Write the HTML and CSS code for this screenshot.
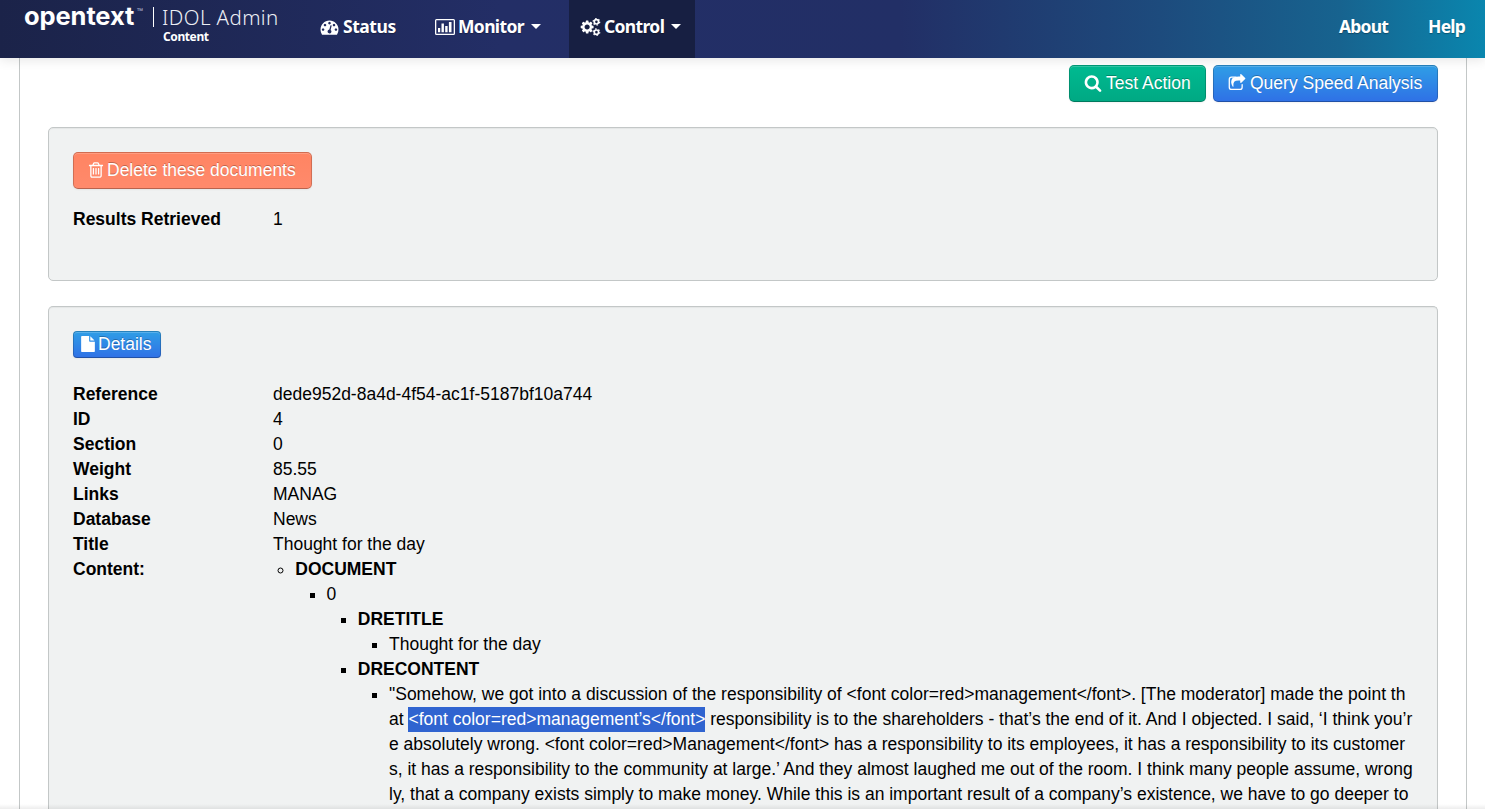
FILE: index.html
```html
<!DOCTYPE html>
<html lang="en">
<head>
<meta charset="utf-8">
<title>IDOL Admin</title>
<link rel="stylesheet" href="styles.css">
</head>
<body>
<header class="navbar">
  <div class="brand">
    <span class="logo">opentext</span><span class="tm">™</span>
    <span class="divider"></span>
    <div class="product"><span class="name">IDOL Admin</span><span class="component">Content</span></div>
  </div>
  <nav class="menu">
    <a class="item status"><svg class="icon" style="width:19px" viewBox="0 0 1792 1792"><path d="M384 1152q0-53-37.500-90.500t-90.500-37.500-90.500 37.500-37.500 90.500 37.500 90.500 90.500 37.500 90.500-37.500 37.500-90.500zm192-448q0-53-37.500-90.500t-90.500-37.500-90.500 37.500-37.500 90.500 37.500 90.500 90.500 37.500 90.500-37.500 37.500-90.500zm428 481l101-382q6-26-7.500-48.500t-38.500-29.500-48 6.500-30 39.500l-101 382q-60 5-107 43.500t-63 98.500q-20 77 20 146t117 89 146-20 89-117q16-60-6-117t-72-91zm660-33q0-53-37.500-90.500t-90.500-37.500-90.500 37.500-37.500 90.500 37.500 90.500 90.500 37.500 90.500-37.500 37.500-90.500zm-640-640q0-53-37.500-90.500t-90.500-37.500-90.500 37.500-37.500 90.500 37.500 90.500 90.500 37.500 90.500-37.500 37.500-90.500zm448 192q0-53-37.500-90.500t-90.500-37.500-90.500 37.500-37.500 90.500 37.500 90.500 90.500 37.500 90.500-37.500 37.500-90.500zm320 448q0 261-141 483-19 29-54 29h-1402q-35 0-54-29-141-221-141-483 0-182 71-348t191-286 286-191 348-71 348 71 286 191 191 286 71 348z"/></svg><span>Status</span></a>
    <a class="item monitor"><svg class="icon" style="width:20px" viewBox="0 0 20 18"><path fill-rule="evenodd" d="M1.500 1h17A1.500 1.500 0 0 1 20 2.500v13a1.500 1.500 0 0 1-1.500 1.500h-17A1.500 1.500 0 0 1 0 15.500v-13A1.500 1.500 0 0 1 1.500 1zM1.300 2.300v13.400h17.400V2.300zM3 10h2.200v4.300H3zM6.500 5.500h2.400v8.800H6.500zM10.200 8h2.400v6.300h-2.400zM13.900 4h2.600v10.300h-2.600z"/></svg><span>Monitor</span><i class="caret"></i></a>
    <a class="item control"><svg class="icon" style="width:20px" viewBox="0 0 1920 1792"><path fill-rule="evenodd" d="M832 896q0-106-75-181t-181-75-181 75-75 181 75 181 181 75 181-75 75-181zm384-91v185q0 10-7 19.500t-16 10.500l-155 24q-11 35-32 76 34 48 90 115 7 11 7 20 0 12-7 19-23 30-82.500 89.500t-78.500 59.500q-11 0-21-7l-115-90q-37 19-77 31-11 108-23 155-7 24-30 24h-186q-11 0-20-7.500t-10-17.500l-23-153q-34-10-75-31l-118 89q-7 7-20 7-11 0-21-8-144-133-144-160 0-9 7-19 10-14 41-53t47-61q-23-44-35-82l-152-24q-10-1-17-9.500t-7-19.500v-185q0-10 7-19.500t16-10.500l155-24q11-35 32-76-34-48-90-115-7-11-7-20 0-12 7-20 22-30 82-89t79-59q11 0 21 7l115 90q34-18 77-32 11-108 23-154 7-24 30-24h186q11 0 20 7.500t10 17.500l23 153q34 10 75 31l118-89q8-7 20-7 11 0 21 8 144 133 144 160 0 8-7 19-12 16-42 54t-45 60q23 48 34 82l152 23q10 2 17 10.500t7 19.500z"/><g fill="none" stroke="#fff"><circle cx="1500" cy="384" r="215" stroke-width="170"/><circle cx="1500" cy="384" r="330" stroke-width="120" stroke-dasharray="150 195.500"/><circle cx="1500" cy="1408" r="215" stroke-width="170"/><circle cx="1500" cy="1408" r="330" stroke-width="120" stroke-dasharray="150 195.500"/></g></svg><span>Control</span><i class="caret"></i></a>
  </nav>
  <nav class="links"><a>About</a><a>Help</a></nav>
</header>
<main class="page">
  <div class="actions">
    <a class="btn green"><svg class="icon" style="width:18px" viewBox="0 0 1792 1792"><path d="M1216 832q0-185-131.500-316.500t-316.500-131.500-316.500 131.500-131.500 316.500 131.500 316.500 316.500 131.500 316.500-131.500 131.500-316.500zm512 832q0 52-38 90t-90 38q-54 0-90-38l-343-342q-179 124-399 124-143 0-273.500-55.500t-225-150-150-225-55.500-273.500 55.500-273.500 150-225 225-150 273.500-55.500 273.500 55.500 225 150 150 225 55.500 273.500q0 220-124 399l343 343q37 37 37 90z"/></svg><span>Test Action</span></a>
    <a class="btn blue"><svg class="icon" style="width:18px" viewBox="0 0 1792 1792"><path d="M800 320H352a224 224 0 0 0-224 224v768a224 224 0 0 0 224 224h832a224 224 0 0 0 224-224v-260" fill="none" stroke="#fff" stroke-width="128" stroke-linecap="round"/><path d="M1709 493l-384 384q-18 19-45 19-12 0-25-5-39-17-39-59v-192h-160q-323 0-438 131-119 137-74 473 3 23-20 34-8 2-12 2-16 0-26-13-10-14-21-31t-39.500-68.500-49.500-99.500-38.500-114-17.500-122q0-49 3.500-91t14-90 28-88 47-81.500 68.500-74 94.500-61.500 124.500-48.500 159.500-30.500 196.500-11h160v-192q0-42 39-59 13-5 25-5 26 0 45 19l384 384q19 19 19 45t-19 45z"/></svg><span>Query Speed Analysis</span></a>
  </div>
  <section class="well summary">
    <a class="btn red"><svg class="icon" style="width:18px" viewBox="0 0 1792 1792"><path d="M704 736v576q0 14-9 23t-23 9h-64q-14 0-23-9t-9-23v-576q0-14 9-23t23-9h64q14 0 23 9t9 23zm256 0v576q0 14-9 23t-23 9h-64q-14 0-23-9t-9-23v-576q0-14 9-23t23-9h64q14 0 23 9t9 23zm256 0v576q0 14-9 23t-23 9h-64q-14 0-23-9t-9-23v-576q0-14 9-23t23-9h64q14 0 23 9t9 23zm128 724v-948h-896v948q0 22 7 40.500t14.500 27 10.500 8.500h832q3 0 10.500-8.500t14.500-27 7-40.500zm-672-1076h448l-48-117q-7-9-17-11h-317q-10 2-17 11zm928 32v64q0 14-9 23t-23 9h-96v948q0 83-47 143.500t-113 60.500h-832q-66 0-113-58.500t-47-141.500v-952h-96q-14 0-23-9t-9-23v-64q0-14 9-23t23-9h309l70-167q15-37 54-63t79-26h320q40 0 79 26t54 63l70 167h309q14 0 23 9t9 23z"/></svg><span>Delete these documents</span></a>
    <dl class="fields"><dt>Results Retrieved</dt><dd>1</dd></dl>
  </section>
  <section class="well document">
    <a class="btn blue small"><svg class="icon" style="width:14px;height:16px" viewBox="0 0 1536 1792"><path d="M1024 512v-472q22 14 36 28l408 408q14 14 28 36h-472zm-128 32q0 40 28 68t68 28h544v1056q0 40-28 68t-68 28h-1344q-40 0-68-28t-28-68v-1600q0-40 28-68t68-28h800v544z"/></svg><span>Details</span></a>
    <dl class="fields">
      <dt>Reference</dt><dd>dede952d-8a4d-4f54-ac1f-5187bf10a744</dd>
      <dt>ID</dt><dd>4</dd>
      <dt>Section</dt><dd>0</dd>
      <dt>Weight</dt><dd>85.55</dd>
      <dt>Links</dt><dd>MANAG</dd>
      <dt>Database</dt><dd>News</dd>
      <dt>Title</dt><dd>Thought for the day</dd>
      <dt>Content:</dt>
      <dd>
        <ul class="tree root">
          <li><b>DOCUMENT</b>
            <ul class="tree"><li>0
              <ul class="tree">
                <li><b>DRETITLE</b><ul class="tree"><li>Thought for the day</li></ul></li>
                <li><b>DRECONTENT</b><ul class="tree"><li class="body-text">
                  <div>"Somehow, we got into a discussion of the responsibility of &lt;font color=red&gt;management&lt;/font&gt;. [The moderator] made the point th</div>
                  <div>at <mark>&lt;font color=red&gt;management’s&lt;/font&gt;</mark> responsibility is to the shareholders - that’s the end of it. And I objected. I said, ‘I think you’r</div>
                  <div>e absolutely wrong. &lt;font color=red&gt;Management&lt;/font&gt; has a responsibility to its employees, it has a responsibility to its customer</div>
                  <div>s, it has a responsibility to the community at large.’ And they almost laughed me out of the room. I think many people assume, wrong</div>
                  <div>ly, that a company exists simply to make money. While this is an important result of a company’s existence, we have to go deeper to</div>
                </li></ul></li>
              </ul>
            </li></ul>
          </li>
        </ul>
      </dd>
    </dl>
  </section>
</main>
<div class="edge-shade"></div>
</body>
</html>
```
FILE: styles.css
```css
* { box-sizing: border-box; }
html, body { height: 100%; }
body {
  margin: 0;
  overflow: hidden;
  display: flex;
  flex-direction: column;
  background: #fff;
  color: #000;
  font: 17.5px/25px "Liberation Sans", Arial, sans-serif;
}
.icon { height: 18px; flex: none; fill: #fff; overflow: visible; }

.navbar {
  position: relative;
  z-index: 1;
  flex: none;
  display: flex;
  height: 58px;
  color: #fff;
  font-family: "Noto Sans", "Open Sans", sans-serif;
  background: linear-gradient(90deg, #1b2349 0, #232e66 500px, #222f66 900px, #1d4b7d 1160px, #17638f 1340px, #0a86ae 1485px);
  box-shadow: 0 1px 12px rgba(0, 0, 0, .12);
}
.brand { display: flex; width: 300px; padding-left: 24px; flex: none; }
.logo { width: 113px; font: bold 25.500px/32px Inter, sans-serif; letter-spacing: -.1px; white-space: nowrap; }
.tm { width: 16px; font-size: 8px; line-height: 22px; color: #aeb3cc; }
.divider { width: 1px; height: 20px; margin-top: 7px; background: #fff; }
.product { display: flex; flex-direction: column; margin-left: 8px; white-space: nowrap; }
.name { font: 300 20.500px/21px "Noto Sans", "Open Sans", sans-serif; letter-spacing: .4px; margin: 7px 0 1px; color: #eceef5; }
.component { font: bold 12px/16px "Noto Sans", sans-serif; letter-spacing: -.4px; margin-left: 1px; }
.menu { display: flex; }
.item { display: flex; align-items: center; gap: 3px; padding-bottom: 5px; font-weight: bold; letter-spacing: -.65px; line-height: 25px; white-space: nowrap; text-shadow: 0 1px 1px rgba(0, 0, 0, .3); }
.item span { display: block; }
.status { width: 135px; padding-left: 20px; letter-spacing: -.45px; gap: 4px; }
.monitor { width: 134px; }
.control { width: 126px; padding-left: 12px; background: #171f42; }
.caret { border: 5px solid transparent; border-top-color: #fff; border-bottom: 0; margin-left: 4px; }
.links { display: flex; gap: 40px; margin-left: auto; padding: 14px 20px 0 0; font-weight: bold; letter-spacing: -.8px; line-height: 25px; text-shadow: 0 1px 1px rgba(0, 0, 0, .3); }

.page {
  flex: 1;
  min-height: 0;
  overflow: hidden;
  display: flex;
  flex-direction: column;
  margin: 0 18px 0 19px;
  padding: 7px 28px 0;
  border: solid #c3c7c7;
  border-width: 0 1px;
}
.actions { display: flex; flex: none; justify-content: flex-end; gap: 7px; margin-bottom: 25px; }
.btn {
  display: flex;
  align-items: center;
  gap: 4px;
  height: 37px;
  padding: 0 14px;
  border: 1px solid rgba(0, 0, 0, .18);
  border-bottom-color: rgba(0, 0, 0, .28);
  border-radius: 5px;
  color: #fff;
  white-space: nowrap;
  text-shadow: 0 -1px 0 rgba(0, 0, 0, .25);
  box-shadow: inset 0 1px 0 rgba(255, 255, 255, .2), 0 1px 2px rgba(0, 0, 0, .05);
}
.green { width: 137px; background: linear-gradient(#00bb91, #00a883) border-box; }
.blue { width: 225px; background: linear-gradient(#2f9fe6, #2f70e6) border-box; }
.red { width: 239px; padding-left: 13px; background: linear-gradient(#ff8462, #ff8a6c) border-box; gap: 2px; }
.btn .icon { margin-bottom: 1px; }
.small { width: 88px; height: 27px; padding: 0 7px 1px; border-radius: 4px; gap: 3px; }
.well {
  flex: none;
  padding: 24px;
  background: #f0f2f2;
  border: 1px solid #c3c7c7;
  border-radius: 5px;
  box-shadow: inset 0 1px 1px rgba(0, 0, 0, .05);
}
.summary { height: 154px; margin-bottom: 25px; }
.document { flex: 1; min-height: 0; border-bottom: 0; border-radius: 5px 5px 0 0; padding-bottom: 0; overflow: hidden; }
.fields { display: grid; grid-template-columns: 200px 1fr; margin: 18px 0 0; }
.document .fields { margin-top: 24px; }
.fields dt { font-weight: bold; }
.fields dd { margin: 0; min-width: 0; }
.tree { margin: 0 0 0 31.250px; padding: 0; list-style: square; }
.root { margin-left: 22.250px; list-style: circle; }
.body-text { white-space: nowrap; }
mark { display: inline-block; color: #fff; background: #3064d0; }
.edge-shade { position: absolute; left: 0; right: 0; top: 804px; height: 5px; background: linear-gradient(transparent, rgba(0, 0, 0, .07)); }
```
